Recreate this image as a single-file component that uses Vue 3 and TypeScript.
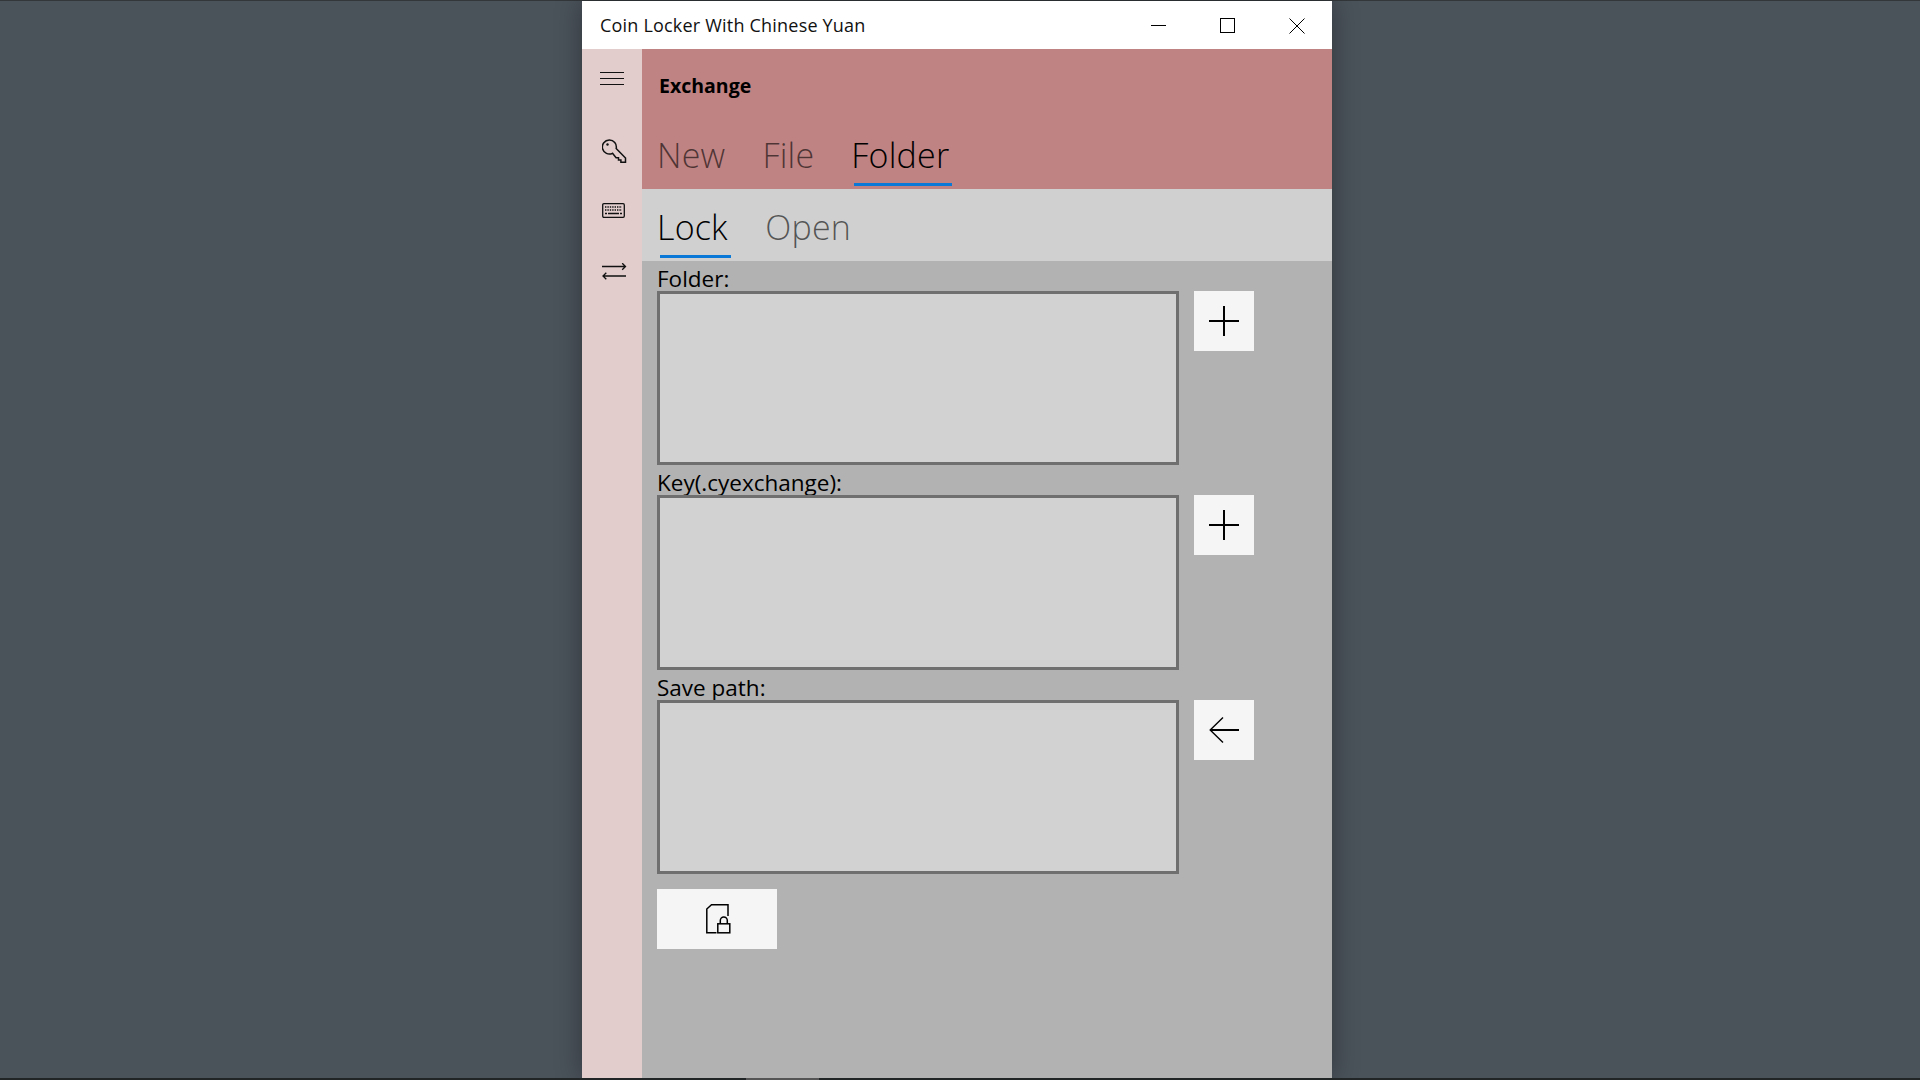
<script setup lang="ts">
interface Tab {
  label: string
  active?: boolean
}
interface Field {
  label: string
  icon: "plus" | "back"
}

const topTabs: Tab[] = [{ label: "New" }, { label: "File" }, { label: "Folder", active: true }]
const subTabs: Tab[] = [{ label: "Lock", active: true }, { label: "Open" }]
const fields: Field[] = [
  { label: "Folder:", icon: "plus" },
  { label: "Key(.cyexchange):", icon: "plus" },
  { label: "Save path:", icon: "back" }
]
</script>

<template>
  <div class="desktop">
    <div class="screen">
      <div class="window">
        <!-- title bar -->
        <div class="titlebar">
          <span class="title">Coin Locker With Chinese Yuan</span>
          <div class="controls">
            <svg width="56" height="48" viewBox="0 0 56 48"><path d="M20 24.5h15" stroke="#000" fill="none" /></svg>
            <svg width="56" height="48" viewBox="0 0 56 48"><rect x="20.5" y="17.5" width="14" height="14" stroke="#000" fill="none" /></svg>
            <svg width="56" height="48" viewBox="0 0 56 48"><path d="M20.5 17.5l15 15M35.5 17.5l-15 15" stroke="#000" fill="none" /></svg>
          </div>
        </div>
        <div class="body">
          <!-- side nav -->
          <nav class="sidebar">
            <svg class="nav-menu" width="24" height="13" viewBox="0 0 24 13"><path d="M0 .5h24M0 6.5h24M0 12.5h24" stroke="#111" fill="none" /></svg>
            <svg class="nav-key" width="26" height="26" viewBox="0 0 26 26" fill="none" stroke="#111" stroke-width="1.5">
              <path d="M10.5 14.3a7 7 0 1 1 3.7-4.8L23.5 19v4.3h-4.6v-2.2h-2.4v-2.4h-2.4l-3.6-4.4z" />
              <circle cx="5.5" cy="5.5" r="1.2" fill="#111" stroke="none" />
            </svg>
            <svg class="nav-keyboard" width="23" height="15" viewBox="0 0 23 15" fill="none">
              <rect x=".7" y=".7" width="21.6" height="13.6" rx="1.2" stroke="#111" stroke-width="1.3" />
              <path d="M3 4h17M3 7h17" stroke="#111" stroke-width="1.4" stroke-dasharray="1.4 1" />
              <path d="M3 10.5h2M6 10.5h11M18 10.5h2" stroke="#111" stroke-width="1.4" />
            </svg>
            <svg class="nav-swap" width="26" height="18" viewBox="0 0 26 18" fill="none" stroke="#111" stroke-width="1.3">
              <path d="M0 3.5h23.5M20.2 .2l3.3 3.3-3.3 3.3" />
              <path d="M24 13H1M4.3 9.7 1 13l3.3 3.3" />
            </svg>
          </nav>
          <main class="main">
            <header class="header">
              <div class="page-name">Exchange</div>
              <div class="tabs top-tabs">
                <div v-for="t in topTabs" :key="t.label" class="tab" :class="{ active: t.active }">
                  <span class="tab-label">{{ t.label }}</span>
                  <span class="tab-bar"></span>
                </div>
              </div>
            </header>
            <div class="tabs sub-tabs">
              <div v-for="t in subTabs" :key="t.label" class="tab" :class="{ active: t.active }">
                <span class="tab-label">{{ t.label }}</span>
                <span class="tab-bar"></span>
              </div>
            </div>
            <div class="content">
              <div v-for="f in fields" :key="f.label" class="field">
                <label class="field-label">{{ f.label }}</label>
                <div class="field-row">
                  <div class="path-box"></div>
                  <button class="icon-btn">
                    <svg v-if="f.icon === 'plus'" width="30" height="30" viewBox="0 0 30 30"><path d="M15 0v30M0 15h30" stroke="#000" stroke-width="2" fill="none" /></svg>
                    <svg v-else width="30" height="26" viewBox="0 0 30 26" fill="none" stroke="#000"><path d="M30 13H1" stroke-width="2" /><path d="M14 .5 1.2 13 14 25.5" stroke-width="1.4" /></svg>
                  </button>
                </div>
              </div>
              <button class="lock-btn">
                <svg width="25" height="30" viewBox="0 0 25 30" fill="none" stroke="#000" stroke-width="1.5">
                  <path d="M10.5 28.7H.8V5L5.5.8H22V12" />
                  <rect x="11.8" y="19.8" width="12" height="9" />
                  <path d="M14.3 19.8v-3.3a3.5 3.5 0 0 1 7 0v3.3" />
                </svg>
              </button>
            </div>
          </main>
        </div>
      </div>
    </div>
    <div class="taskbar"><span class="task-item"></span></div>
  </div>
</template>

<style scoped>
.desktop {
  width: 1920px;
  height: 1080px;
  display: flex;
  flex-direction: column;
  background: #4a525a;
  overflow: hidden;
  font-family: "Open Sans", "Noto Sans", sans-serif;
  color: #000;
}
.screen {
  flex: 1;
  min-height: 0;
  display: flex;
  padding-left: 582px;
  padding-top: 1px;
  background: linear-gradient(#33373a 0, #33373a 1px, #4a525a 1px);
}
.window {
  width: 750px;
  display: flex;
  flex-direction: column;
  box-shadow: 0 0 24px rgba(0, 0, 0, 0.35);
}
.titlebar {
  height: 48px;
  background: #fff;
  display: flex;
  align-items: center;
  justify-content: space-between;
  flex-shrink: 0;
}
.title {
  margin-left: 18px;
  font-size: 18px;
  letter-spacing: 0.2px;
  color: #111;
}
.controls {
  display: flex;
  margin-right: 7px;
  height: 48px;
  gap: 13px;
}
.controls svg {
  display: block;
}
.body {
  flex: 1;
  min-height: 0;
  display: flex;
}
.sidebar {
  width: 60px;
  background: #e2cccc;
  display: flex;
  flex-direction: column;
  flex-shrink: 0;
}
.nav-menu {
  margin: 23px 0 0 18px;
}
.nav-key {
  margin: 54px 0 0 20px;
}
.nav-keyboard {
  margin: 38px 0 0 20px;
}
.nav-swap {
  margin: 45px 0 0 20px;
}
.main {
  flex: 1;
  display: flex;
  flex-direction: column;
  background: #b2b2b2;
}
.header {
  height: 140px;
  background: #c08383;
  display: flex;
  flex-direction: column;
}
.page-name {
  margin: 23px 0 0 17px;
  font-size: 19.5px;
  line-height: 27px;
  font-weight: 700;
  color: #000;
}
.tabs {
  display: flex;
  padding-left: 15px;
}
.top-tabs {
  margin-top: 31px;
  gap: 37px;
}
.sub-tabs {
  height: 72px;
  box-sizing: border-box;
  background: #d0d0d0;
  padding-top: 13px;
  gap: 37.5px;
}
.tab {
  display: flex;
  flex-direction: column;
  color: rgba(0, 0, 0, 0.6);
}
.tab.active {
  color: #000;
}
.tab-label {
  font-size: 34px;
  line-height: 50px;
  font-weight: 300;
  letter-spacing: 0.2px;
}
.tab-bar {
  height: 3px;
  margin: 3px -3px 0 3px;
}
.tab.active .tab-bar {
  background: #0a78d7;
}
.content {
  padding: 4px 0 0 15px;
  display: flex;
  flex-direction: column;
}
.field-label {
  display: block;
  font-size: 22.5px;
  line-height: 27px;
  height: 26px;
  white-space: nowrap;
}
.field-row {
  display: flex;
  gap: 15px;
  align-items: flex-start;
  margin-bottom: 4px;
}
.path-box {
  width: 522px;
  height: 174.4px;
  box-sizing: border-box;
  background: #d2d2d2;
  border: 3px solid #6f6f6f;
}
.icon-btn,
.lock-btn {
  height: 60px;
  border: 0;
  padding: 0;
  background: #f5f5f5;
  display: flex;
  align-items: center;
  justify-content: center;
}
.icon-btn {
  width: 60px;
}
.lock-btn {
  width: 120px;
  margin-top: 10.8px;
  padding-left: 2px;
}
.taskbar {
  height: 2px;
  background: #222526;
  flex-shrink: 0;
  display: flex;
}
.task-item {
  width: 73px;
  margin-left: 746px;
  background: #555;
}
</style>

<style>
html,
body {
  margin: 0;
  background: #4a525a;
}
</style>
